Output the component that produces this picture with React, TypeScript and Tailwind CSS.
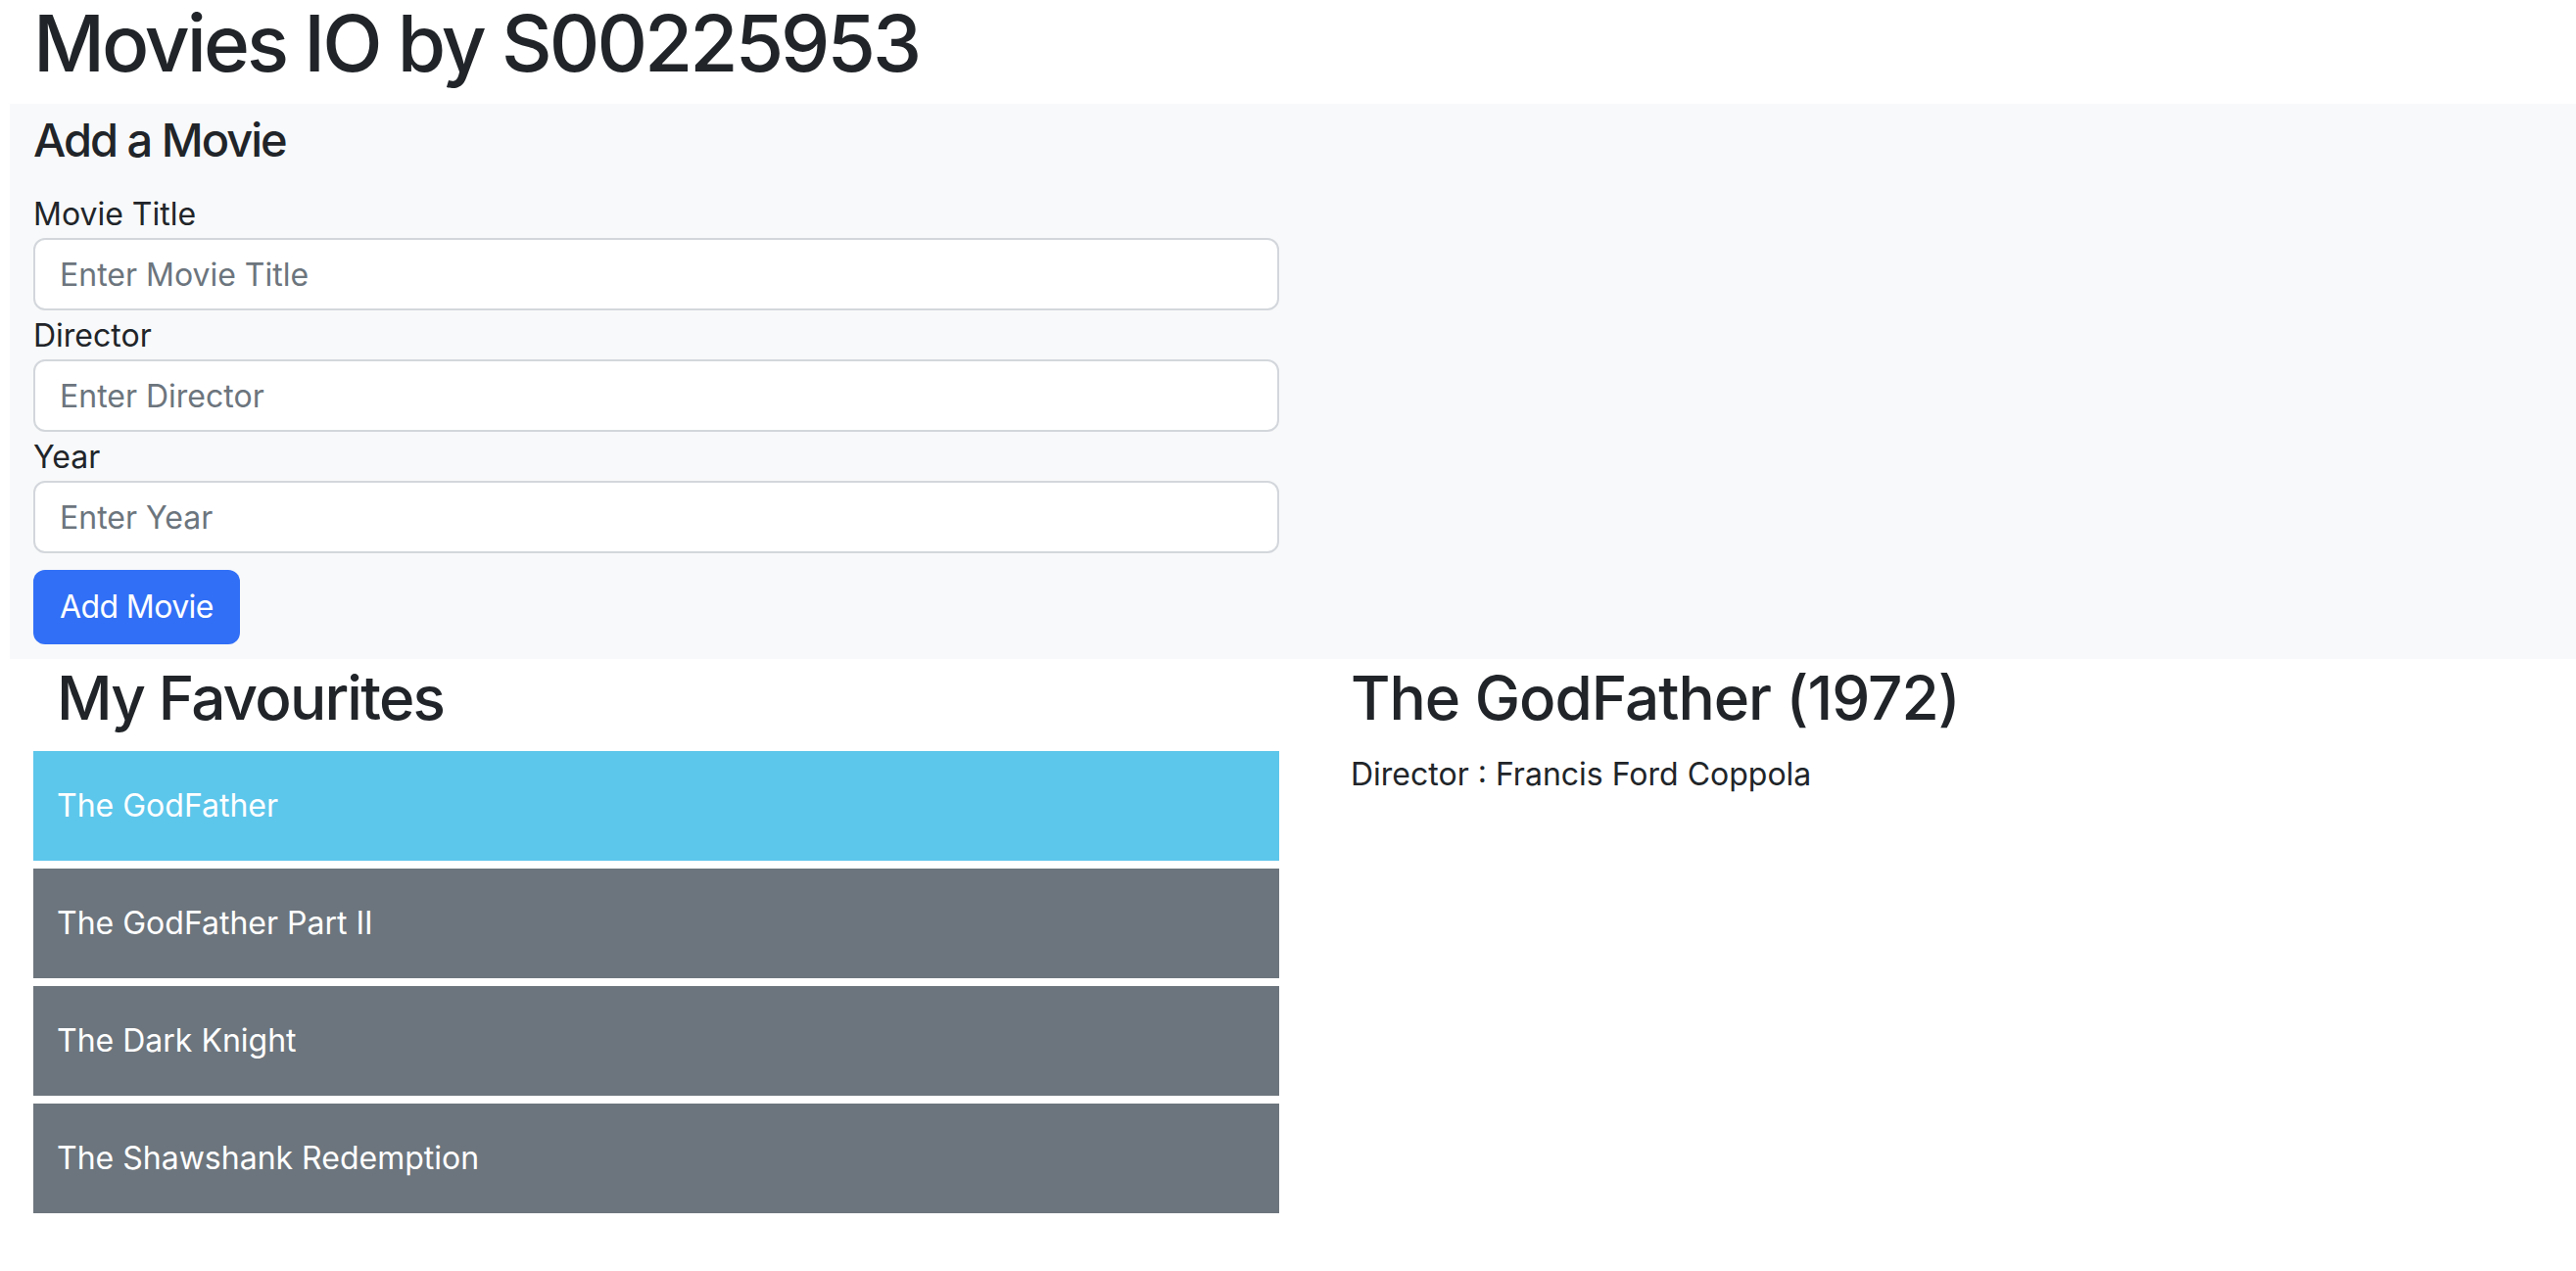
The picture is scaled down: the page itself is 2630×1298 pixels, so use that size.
import React, { useState } from 'react';

type Movie = { title: string; director: string; year: number };

const initialMovies: Movie[] = [
  { title: 'The GodFather', director: 'Francis Ford Coppola', year: 1972 },
  { title: 'The GodFather Part II', director: 'Francis Ford Coppola', year: 1974 },
  { title: 'The Dark Knight', director: 'Christopher Nolan', year: 2008 },
  { title: 'The Shawshank Redemption', director: 'Frank Darabont', year: 1994 },
];

export default function App() {
  const [movies, setMovies] = useState<Movie[]>(initialMovies);
  const [selected, setSelected] = useState(0);
  const [form, setForm] = useState({ title: '', director: '', year: '' });

  const handleSubmit = (e: React.FormEvent) => {
    e.preventDefault();
    if (!form.title) return;
    setMovies([...movies, { title: form.title, director: form.director, year: Number(form.year) }]);
    setForm({ title: '', director: '', year: '' });
  };

  const current = movies[selected];

  return (
    <div className="min-h-screen bg-white text-[#212529] font-['Inter',sans-serif]">
      <h1 className="pl-[34px] text-[80px] leading-[88px] font-medium mb-[18px] tracking-[-3px]">Movies IO by S00225953</h1>

      <form className="ml-[10px] bg-[#f8f9fa] pl-[24px] pt-[9px] pb-[15px]" onSubmit={handleSubmit}>
        <div className="w-[1272px]">
          <h4 className="text-[47px] leading-[56px] font-medium tracking-[-2px] mb-[24px]">Add a Movie</h4>

          <label className="block text-[32px] leading-[48px]">Movie Title</label>
          <input
            type="text"
            placeholder="Enter Movie Title"
            className="block w-full h-[74px] mb-[2px] px-[25px] text-[32px] bg-white border-2 border-[#d3d7dc] rounded-[12px] outline-none placeholder:text-[#6c757d]"
            value={form.title}
            onChange={(e) => setForm({ ...form, title: e.target.value })}
          />

          <label className="block text-[32px] leading-[48px]">Director</label>
          <input
            type="text"
            placeholder="Enter Director"
            className="block w-full h-[74px] mb-[2px] px-[25px] text-[32px] bg-white border-2 border-[#d3d7dc] rounded-[12px] outline-none placeholder:text-[#6c757d]"
            value={form.director}
            onChange={(e) => setForm({ ...form, director: e.target.value })}
          />

          <label className="block text-[32px] leading-[48px]">Year</label>
          <input
            type="text"
            placeholder="Enter Year"
            className="block w-full h-[74px] mb-[17px] px-[25px] text-[32px] bg-white border-2 border-[#d3d7dc] rounded-[12px] outline-none placeholder:text-[#6c757d]"
            value={form.year}
            onChange={(e) => setForm({ ...form, year: e.target.value })}
          />

          <button type="submit" className="block h-[76px] px-[27px] bg-[#316ff6] text-white text-[32px] tracking-[-0.6px] rounded-[12px]">
            Add Movie
          </button>
        </div>
      </form>

      <div className="flex mt-[3px] pl-[34px]">
        <div className="w-[1272px]">
          <h2 className="pl-[24px] text-[62px] leading-[74px] font-medium tracking-[-1.8px] mb-[17px]">My Favourites</h2>
          <ul className="flex flex-col gap-[8px]">
            {movies.map((m, i) => (
              <li
                key={m.title + i}
                onClick={() => setSelected(i)}
                className={
                  'h-[112px] flex items-center pl-[24px] text-white text-[32px] cursor-pointer ' +
                  (i === selected ? 'bg-[#5dc6eb]' : 'bg-[#6c757d]')
                }
              >
                {m.title}
              </li>
            ))}
          </ul>
        </div>

        <div className="ml-[73px]">
          <h2 className="text-[62px] leading-[74px] font-medium tracking-[-1px] mb-[17px]">
            {current.title} ({current.year})
          </h2>
          <p className="text-[32px] leading-[48px]">Director : {current.director}</p>
        </div>
      </div>
    </div>
  );
}
